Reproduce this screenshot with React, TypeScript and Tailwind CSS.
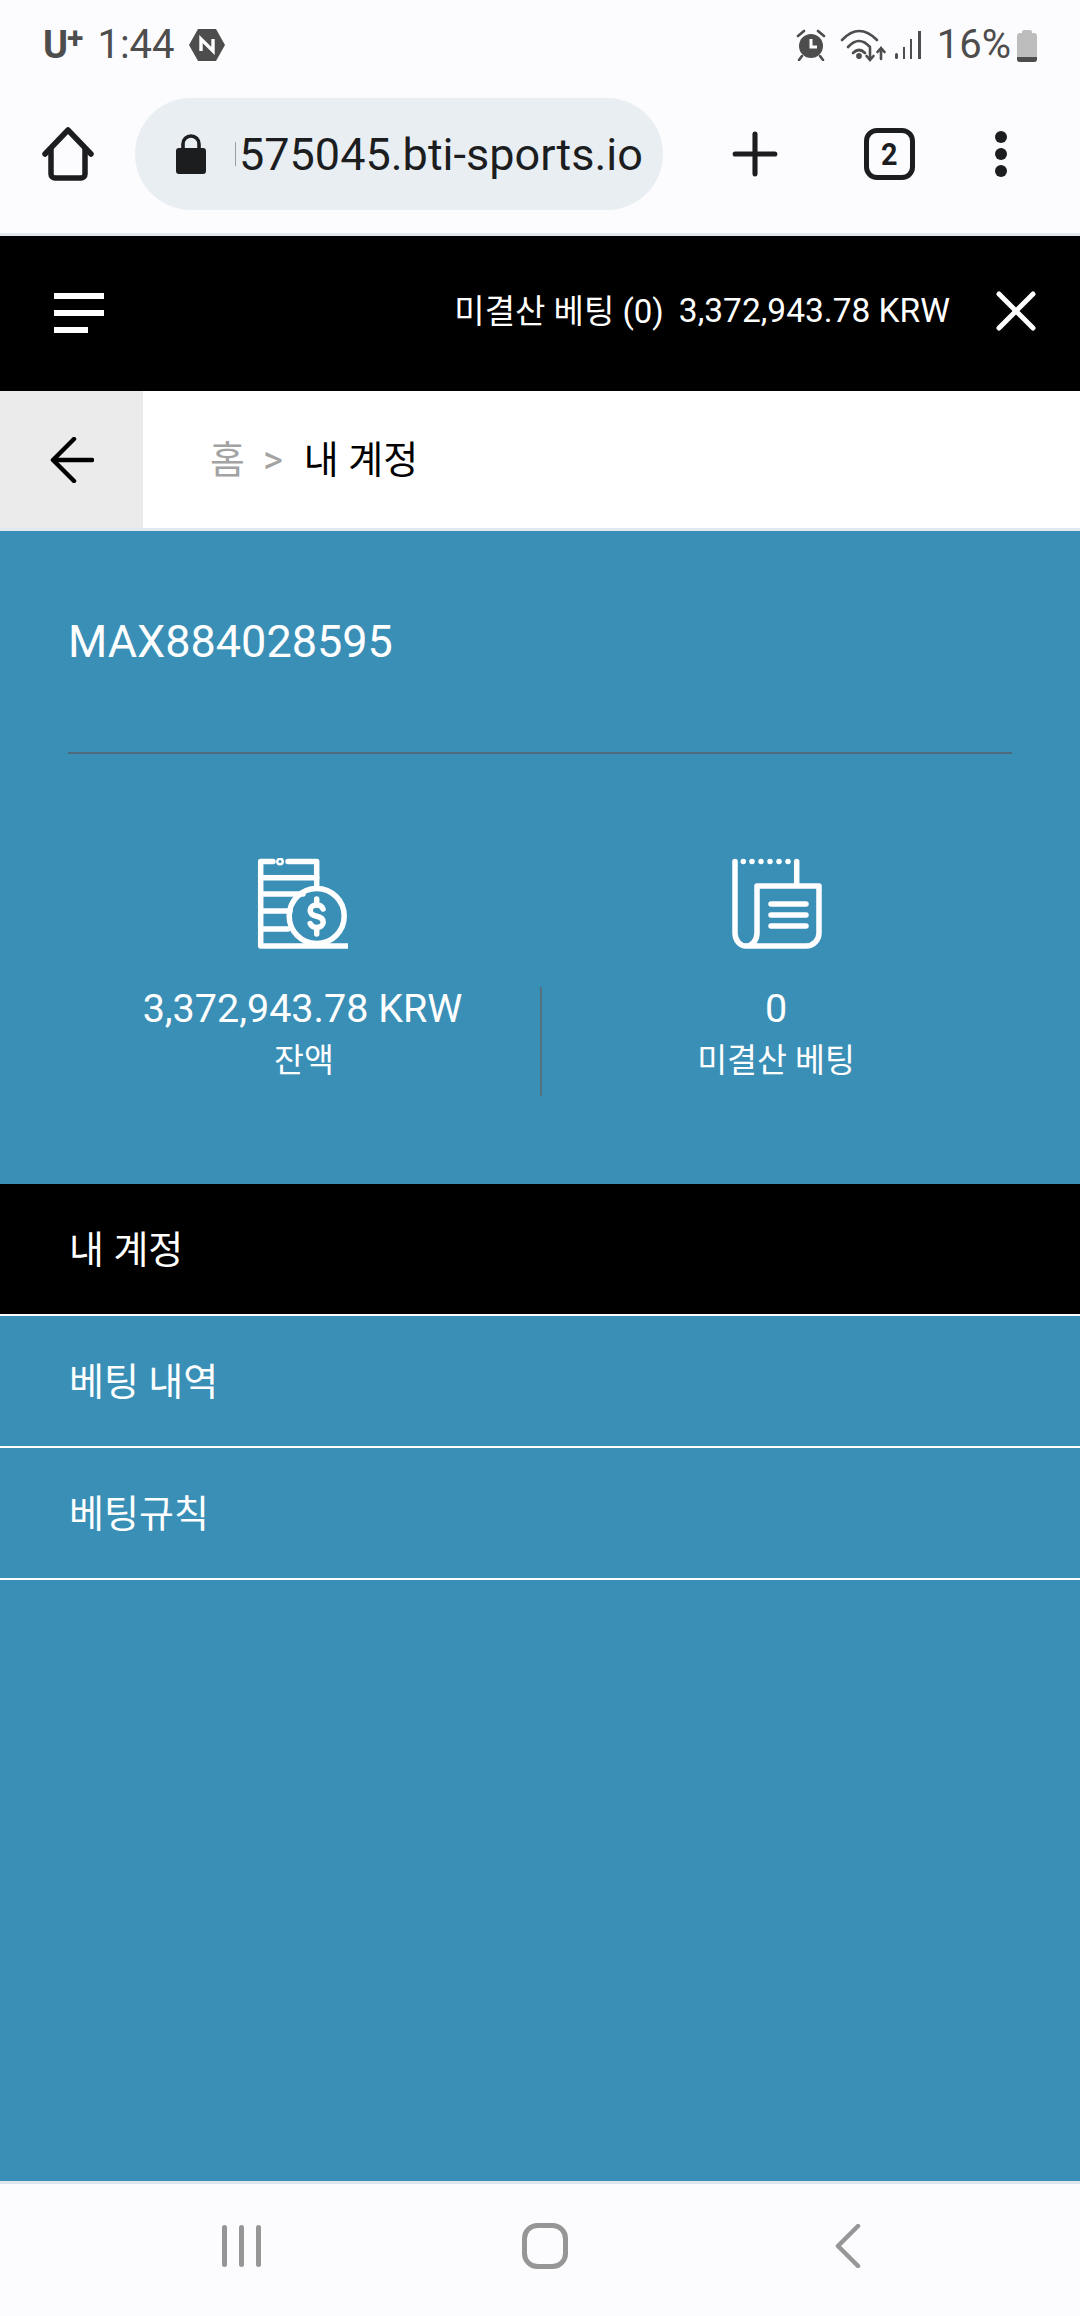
import { Plus } from "lucide-react";

const FONT = "font-['Roboto','Noto_Sans_CJK_KR',sans-serif]";

function StatusBar() {
  return (
    <div className="flex h-[90px] items-center justify-between px-[43px] text-[#4d4d4d]">
      <div className="flex items-center">
        <span className="text-[38px] font-bold leading-none tracking-[-1px]">U</span>
        <span className="mb-[14px] text-[30px] font-bold leading-none">+</span>
        <span className="ml-[14px] text-[40px] leading-none">1:44</span>
        <svg viewBox="0 0 36 32" className="ml-[14px] h-[32px] w-[36px]">
          <path d="M9 0h18l9 16-9 16H9L0 16z" fill="#4d4d4d" />
          <path d="M12 22V10l12 12V10" fill="none" stroke="#fff" strokeWidth="3.4" />
        </svg>
      </div>
      <div className="flex items-center">
        <svg viewBox="0 0 30 32" className="h-[32px] w-[30px]">
          <circle cx="15" cy="17" r="12" fill="#4d4d4d" />
          <path d="M15 10v8h6" fill="none" stroke="#fff" strokeWidth="3" />
          <path d="M2 7l6-5M28 7l-6-5M6 27l-3 4M24 27l3 4" stroke="#4d4d4d" strokeWidth="2.6" strokeLinecap="round" />
        </svg>
        <svg viewBox="0 0 46 34" className="ml-[14px] h-[34px] w-[46px]" fill="none" stroke="#4d4d4d" strokeWidth="2.6" strokeLinecap="round">
          <path d="M2 12Q19-6 37 12" />
          <path d="M8 19Q19 7 30 19" />
          <path d="M13 25Q19 19 25 25" />
          <circle cx="19" cy="28" r="1.6" fill="#4d4d4d" />
          <path d="M30 20v12M26.500 28l3.500 4 3.500-4" />
          <path d="M41 31V20M37.500 24l3.500-4 3.500 4" />
        </svg>
        <svg viewBox="0 0 28 32" className="ml-[8px] h-[32px] w-[28px]" fill="#4d4d4d">
          <rect x="1" y="24" width="3" height="6" rx="1.500" />
          <rect x="9" y="18" width="2" height="12" />
          <rect x="16" y="10" width="2" height="20" />
          <rect x="24" y="2" width="3" height="28" />
        </svg>
        <span className="ml-[15px] text-[40px] leading-none">16%</span>
        <div className="ml-[6px] mt-[1px] flex w-[20px] flex-col items-center">
          <div className="h-[3px] w-[10px] rounded-t-[2px] bg-[#bdbdbd]" />
          <div className="flex h-[29px] w-[20px] flex-col justify-end overflow-hidden rounded-[3px] bg-[#bdbdbd]">
            <div className="h-[5px] bg-[#4d4d4d]" />
          </div>
        </div>
      </div>
    </div>
  );
}

function Toolbar() {
  return (
    <div className="flex h-[146px] items-start border-b-[3px] border-[#dfe6ed] pt-[8px] text-[#1c1d1f]">
      <div className="flex h-[112px] w-[135px] items-center justify-center">
        <svg viewBox="0 0 52 54" className="h-[54px] w-[52px]" fill="none" stroke="#1c1d1f" strokeWidth="5.500" strokeLinecap="round" strokeLinejoin="round">
          <path d="M3 27L26 3l23 24" />
          <path d="M9 22v25a4 4 0 0 0 4 4h26a4 4 0 0 0 4-4V22" />
        </svg>
      </div>
      <div className="flex h-[112px] w-[528px] items-center overflow-hidden rounded-full bg-[#e9eef3] pl-[41px]">
        <svg viewBox="0 0 30 40" className="h-[40px] w-[30px]" fill="#1c1d1f">
          <path d="M7 15V10a8 8 0 0 1 16 0v5" fill="none" stroke="#1c1d1f" strokeWidth="3.600" />
          <rect x="0" y="14" width="30" height="26" rx="3" />
        </svg>
        <span className="ml-[29px] h-[24px] w-[1px] bg-[#9a9ea3]" />
        <span className="ml-[3px] whitespace-nowrap text-[45px] leading-none">575045.bti-sports.io</span>
      </div>
      <div className="flex h-[112px] w-[183px] items-center justify-center">
        <Plus size={68} strokeWidth={1.800} color="#1c1d1f" />
      </div>
      <div className="flex h-[112px] w-[87px] items-center justify-center">
        <div className="flex h-[52px] w-[51px] shrink-0 items-center justify-center rounded-[13px] border-[5px] border-[#1c1d1f] leading-none">
          <span className="scale-x-90 text-[32px] font-bold leading-none">2</span>
        </div>
      </div>
      <div className="flex h-[112px] flex-1 flex-col items-center justify-center gap-[5px] pr-[12px]">
        <div className="h-[12px] w-[12px] rounded-full bg-[#1c1d1f]" />
        <div className="h-[12px] w-[12px] rounded-full bg-[#1c1d1f]" />
        <div className="h-[12px] w-[12px] rounded-full bg-[#1c1d1f]" />
      </div>
    </div>
  );
}

function BalanceIcon() {
  return (
    <svg viewBox="0 0 92 92" className="h-[92px] w-[92px]" fill="none" stroke="#fff" strokeWidth="5.500" strokeLinecap="round" strokeLinejoin="round">
      <path d="M17 3.500H4.700V88H91" />
      <circle cx="24" cy="3.500" r="1.200" />
      <path d="M32 3.500h28.700V30" />
      <path d="M5 19.700h55.700M5 36h42M5 53h29M5 71h27" />
      <circle cx="60.700" cy="58" r="27.500" />
      <path d="M67 51c-1-3-3.500-4-6.300-4-3.500 0-6.500 2-6.500 5.500 0 3.500 3 5 6.500 5.800 3.500.8 6.500 2.500 6.500 5.800 0 3.500-3 5.500-6.500 5.500-3 0-5.500-1.500-6.500-4M60.700 41v6M60.700 70.500V76" />
    </svg>
  );
}

function OpenBetsIcon() {
  return (
    <svg viewBox="0 0 92 92" className="h-[92px] w-[92px]" fill="none" stroke="#fff" strokeWidth="5.500" strokeLinecap="round" strokeLinejoin="round">
      <path d="M5 3.500V75a11 13 0 0 0 22 0V28h62v47a13 13 0 0 1-13 13H16" />
      <path d="M66.700 3.500V26" />
      <path d="M13.300 3.500h.01M22 3.500h.01M31 3.500h.01M40 3.500h.01M49 3.500h.01M58 3.500h.01" />
      <path d="M41 46h35M41 57h35M41 68h35" />
    </svg>
  );
}

function Stat({ icon, value, label, shiftIcon }: { icon: React.ReactNode; value: string; label: string; shiftIcon?: boolean }) {
  return (
    <div className="flex flex-col items-center">
      <div className={`h-[92px] ${shiftIcon ? "mr-[4px]" : ""}`}>{icon}</div>
      <div className={`mt-[36px] text-[39.500px] leading-[46px] ${shiftIcon ? "mr-[3px]" : ""}`}>{value}</div>
      <div className="mt-[8px] text-[32.500px] leading-[42px]">{label}</div>
    </div>
  );
}

function MenuRow({ label, active }: { label: string; active?: boolean }) {
  return (
    <div className={`flex h-[132px] items-center border-b-[2px] border-white pl-[69px] pt-[2px] text-[38px] text-white ${active ? "bg-black" : ""}`}>
      {label}
    </div>
  );
}

export default function App() {
  return (
    <div className={`flex h-[2316px] w-[1080px] flex-col overflow-hidden bg-[#fcfcfe] ${FONT}`}>
      <StatusBar />
      <Toolbar />

      <div className="flex h-[155px] items-center bg-black pl-[54px] pr-[44px] text-white">
        <div className="mb-[2px] flex flex-col gap-[11px]">
          <div className="h-[6px] w-[50px] bg-white" />
          <div className="h-[6px] w-[50px] bg-white" />
          <div className="h-[6px] w-[34px] bg-white" />
        </div>
        <span className="mb-[5px] ml-auto text-[33px] leading-none">미결산 베팅 (0)</span>
        <span className="mb-[5px] ml-[15px] text-[33.500px] leading-none">3,372,943.78 KRW</span>
        <svg viewBox="0 0 40 40" className="mb-[5px] ml-[46px] h-[40px] w-[40px]" stroke="#fff" strokeWidth="5" strokeLinecap="round">
          <path d="M3 3l34 34M37 3L3 37" />
        </svg>
      </div>

      <div className="flex h-[137px] items-center bg-white">
        <div className="flex h-full w-[143px] items-center justify-center bg-[#ebebeb]">
          <svg viewBox="0 0 44 46" className="h-[46px] w-[44px]" fill="none" stroke="#000" strokeWidth="4.500" strokeLinecap="round" strokeLinejoin="round">
            <path d="M42 23H3M24 2L3 23l21 21" />
          </svg>
        </div>
        <div className="ml-[67px] flex items-center text-[38px] leading-none">
          <span className="text-[#a3a3a3]">홈</span>
          <span className="ml-[18px] text-[38px] text-[#a3a3a3]">&gt;</span>
          <span className="ml-[21px] text-black">내 계정</span>
        </div>
      </div>

      <div className="flex flex-1 flex-col border-t-[3px] border-[#dfe9ef] bg-[#3a8fb7] text-white">
        <div className="mx-[68px] flex h-[223px] items-center border-b-[2px] border-[#4d6b7a] text-[45px] leading-none">
          MAX884028595
        </div>
        <div className="mx-[68px] grid h-[430px] grid-cols-2 items-start pt-[104px] text-center">
          <Stat icon={<BalanceIcon />} value="3,372,943.78 KRW" label="잔액" shiftIcon />
          <div className="relative">
            <div className="absolute left-0 top-[129px] h-[109px] w-[2px] bg-[#55707e]" />
            <Stat icon={<OpenBetsIcon />} value="0" label="미결산 베팅" />
          </div>
        </div>
        <MenuRow label="내 계정" active />
        <MenuRow label="베팅 내역" />
        <MenuRow label="베팅규칙" />
      </div>

      <div className="flex h-[135px] items-center justify-center border-t-[3px] border-[#dfe6ed] bg-[#fcfcfe] pb-[8px]">
        <div className="ml-[10px] grid w-[908px] grid-cols-3 items-center justify-items-center">
          <svg viewBox="0 0 42 44" className="h-[44px] w-[42px]" fill="#969696">
            <rect x="1" y="1" width="5" height="42" rx="2.500" />
            <rect x="18" y="1" width="5" height="42" rx="2.500" />
            <rect x="35" y="1" width="5" height="42" rx="2.500" />
          </svg>
          <svg viewBox="0 0 46 46" className="h-[46px] w-[46px]" fill="none" stroke="#969696" strokeWidth="5">
            <rect x="2.500" y="2.500" width="41" height="41" rx="13" />
          </svg>
          <svg viewBox="0 0 28 44" className="h-[44px] w-[28px]" fill="none" stroke="#969696" strokeWidth="4.500" strokeLinecap="round" strokeLinejoin="round">
            <path d="M24 2L4 22l20 20" />
          </svg>
        </div>
      </div>
    </div>
  );
}
